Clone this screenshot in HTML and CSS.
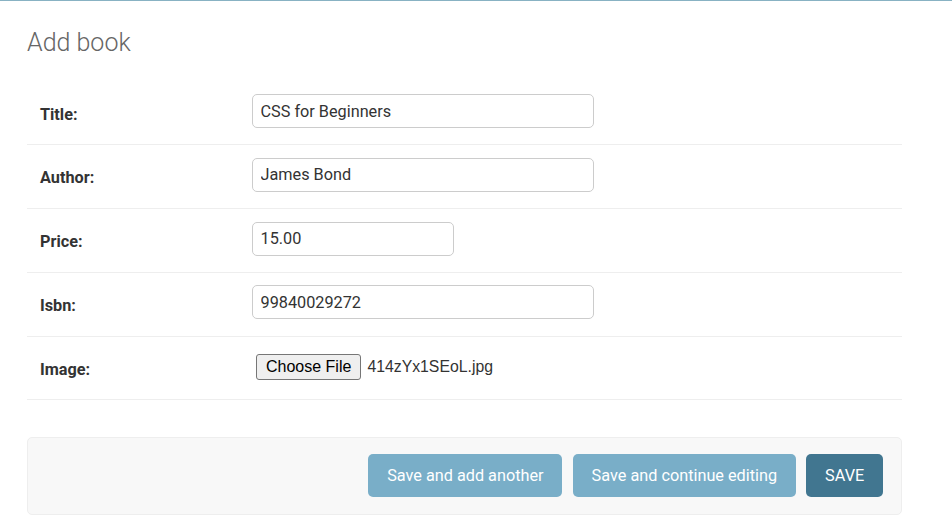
FILE: index.html
```html
<!DOCTYPE html>
<html lang="en">
<head>
<meta charset="utf-8">
<title>Add book</title>
<link rel="stylesheet" href="styles.css">
</head>
<body>
<div class="topline"></div>
<main class="content">
  <h1 class="page-title">Add book</h1>
  <form class="book-form">
    <div class="form-row">
      <label class="field-label" for="id_title">Title:</label>
      <input class="text-input" id="id_title" type="text" value="CSS for Beginners">
    </div>
    <div class="form-row">
      <label class="field-label" for="id_author">Author:</label>
      <input class="text-input" id="id_author" type="text" value="James Bond">
    </div>
    <div class="form-row">
      <label class="field-label" for="id_price">Price:</label>
      <input class="text-input short" id="id_price" type="text" value="15.00">
    </div>
    <div class="form-row">
      <label class="field-label" for="id_isbn">Isbn:</label>
      <input class="text-input" id="id_isbn" type="text" value="99840029272">
    </div>
    <div class="form-row">
      <label class="field-label" for="id_image">Image:</label>
      <div class="file-widget">
        <button type="button" class="file-button" id="id_image">Choose File</button>
        <span class="file-name">414zYx1SEoL.jpg</span>
      </div>
    </div>
    <div class="submit-row">
      <button type="button" class="btn btn-light">Save and add another</button>
      <button type="button" class="btn btn-light">Save and continue editing</button>
      <button type="button" class="btn btn-default">SAVE</button>
    </div>
  </form>
</main>
</body>
</html>
```
FILE: styles.css
```css
* {
  box-sizing: border-box;
}

html, body {
  margin: 0;
  padding: 0;
  background: #fff;
}

body {
  font-family: Roboto, "Liberation Sans", sans-serif;
  color: #333;
  font-size: 16.25px;
}

.topline {
  height: 1px;
  background: #88b2c3;
}

.content {
  padding: 0 50px 4px 27px;
}

.page-title {
  margin: 26.5px 0 0 0;
  font-size: 25px;
  font-weight: 300;
  line-height: 30px;
  color: #666;
  height: 54px;
}

.book-form {
  display: flex;
  flex-direction: column;
}

.form-row {
  display: flex;
  align-items: flex-start;
  padding: 12.5px 12px 16.25px 13px;
  border-bottom: 1px solid #eee;
}

.field-label {
  flex: 0 0 212px;
  font-weight: 700;
  font-size: 16.25px;
  line-height: 19px;
  color: #333;
  padding-top: 10.5px;
}

.text-input {
  width: 342px;
  height: 34px;
  margin: 0;
  padding: 0 7.5px;
  border: 1px solid #ccc;
  border-radius: 5px;
  font-family: Roboto, "Liberation Sans", sans-serif;
  font-size: 16.25px;
  color: #333;
  background: #fff;
  outline: none;
}

.text-input.short {
  width: 202px;
}

.file-widget {
  display: flex;
  align-items: center;
  height: 34px;
  padding-left: 4px;
  padding-top: 1px;
  gap: 6px;
}

.file-button {
  height: 26px;
  padding: 0 9px;
  margin: 0;
  border: 1px solid #767676;
  border-radius: 3px;
  background: #efefef;
  color: #000;
  font-family: "Liberation Sans", Arial, sans-serif;
  font-size: 16px;
  line-height: 24px;
}

.file-name {
  font-family: "Liberation Sans", Arial, sans-serif;
  font-size: 15.8px;
  color: #333;
}

.submit-row {
  margin-top: 37px;
  display: flex;
  justify-content: flex-end;
  gap: 10.5px;
  padding: 16px 18px 17px 18px;
  background: #f8f8f8;
  border: 1px solid #eee;
  border-radius: 5px;
}

.btn {
  border: none;
  border-radius: 5px;
  padding: 12.5px 18.75px;
  font-family: Roboto, "Liberation Sans", sans-serif;
  font-size: 16.25px;
  line-height: 17.5px;
  color: #fff;
  margin: 0;
}

.btn-light {
  background: #79aec8;
}

.btn-default {
  background: #417690;
}
```
